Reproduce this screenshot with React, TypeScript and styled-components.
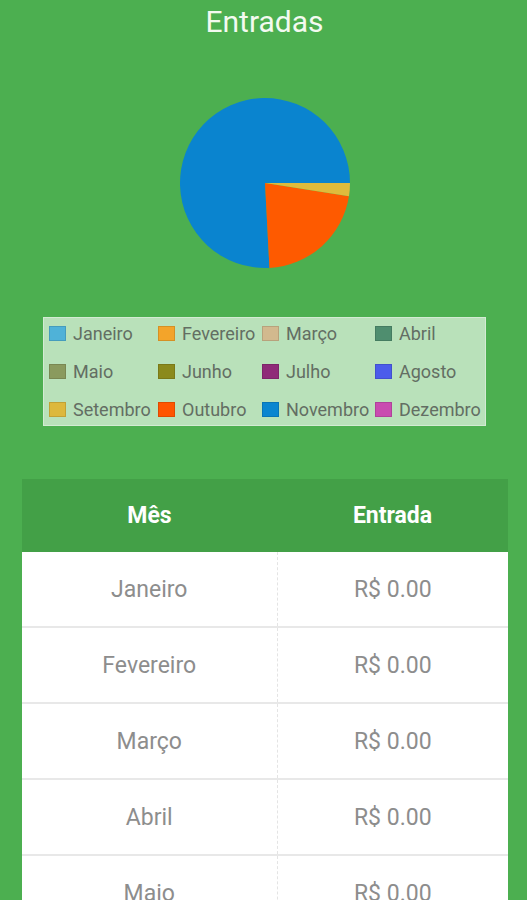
import React from "react";
import styled, { createGlobalStyle } from "styled-components";

const Global = createGlobalStyle`
  html, body { margin: 0; padding: 0; background: #4caf50; }
  body { font-family: Roboto, "Liberation Sans", sans-serif; }
`;

const Page = styled.div`
  width: 527px;
  min-height: 900px;
  background: #4caf50;
  overflow: hidden;
`;

const Title = styled.h1`
  margin: 0;
  padding-top: 2px;
  line-height: 40px;
  font-size: 30px;
  font-weight: 400;
  color: #f3faf0;
  text-align: center;
  padding-left: 2px;
`;

const PieWrap = styled.div`
  display: flex;
  justify-content: center;
  padding-left: 3px;
  margin-top: 55px;
  svg { display: block; }
`;

const Legend = styled.div`
  box-sizing: border-box;
  margin: 48px 0 0 43px;
  width: 443px;
  height: 109px;
  background: #b9e1ba;
  border: 1px solid #d3ebd3;
  padding: 0 5px;
  display: grid;
  grid-template-columns: 109px 104px 113px auto;
  grid-auto-rows: 30px;
  row-gap: 8px;
`;

const LegendItem = styled.div`
  display: flex;
  align-items: center;
  font-size: 18px;
  color: #636e63;
  white-space: nowrap;
`;

const Swatch = styled.span<{ $c: string }>`
  box-sizing: border-box;
  width: 17px;
  height: 15px;
  margin-right: 7px;
  background: ${(p) => p.$c};
  border: 1px solid rgba(0, 0, 0, 0.12);
  flex: none;
`;

const Table = styled.table`
  margin: 53px 0 0 22px;
  width: 486px;
  border-collapse: collapse;
  table-layout: fixed;
  background: #fff;
`;

const HeadCell = styled.th`
  height: 73px;
  padding: 0;
  background: #43a047;
  color: #fff;
  font-size: 23px;
  font-weight: 700;
  text-align: center;
`;

const Row = styled.tr`
  border-bottom: 2px solid #e8e8e8;
`;

const Cell = styled.td<{ $first?: boolean }>`
  height: 74px;
  padding: 0;
  text-align: center;
  font-size: 23px;
  color: #8d8d8d;
  border-right: ${(p) => (p.$first ? "1px dashed #e4e4e4" : "none")};
`;

const legend = [
  ["Janeiro", "#4fb2d8"],
  ["Fevereiro", "#f3a42a"],
  ["Março", "#d2b98e"],
  ["Abril", "#4f8e6f"],
  ["Maio", "#8a9a5e"],
  ["Junho", "#8b8a1c"],
  ["Julho", "#8f2b78"],
  ["Agosto", "#4b5ceb"],
  ["Setembro", "#ddb83c"],
  ["Outubro", "#ff5500"],
  ["Novembro", "#0a86d0"],
  ["Dezembro", "#c94bb0"],
];

export default function App() {
  return (
    <Page>
      <Global />
      <Title>Entradas</Title>
      <PieWrap>
        <svg width="172" height="172" viewBox="0 0 172 172">
          <path d="M86 86 L90.45 170.88 A85 85 0 1 1 171 86 Z" fill="#0a84cf" />
          <path d="M86 86 L169.95 99.3 A85 85 0 0 1 90.45 170.88 Z" fill="#fe5a00" />
          <path d="M86 86 L171 86 A85 85 0 0 1 169.95 99.3 Z" fill="#dfbb3c" />
        </svg>
      </PieWrap>
      <Legend>
        {legend.map(([name, c]) => (
          <LegendItem key={name}>
            <Swatch $c={c} />
            {name}
          </LegendItem>
        ))}
      </Legend>
      <Table>
        <colgroup>
          <col style={{ width: 255 }} />
          <col style={{ width: 231 }} />
        </colgroup>
        <thead>
          <tr>
            <HeadCell>Mês</HeadCell>
            <HeadCell>Entrada</HeadCell>
          </tr>
        </thead>
        <tbody>
          {legend.map(([name]) => (
            <Row key={name}>
              <Cell $first>{name}</Cell>
              <Cell>R$ 0.00</Cell>
            </Row>
          ))}
        </tbody>
      </Table>
    </Page>
  );
}
